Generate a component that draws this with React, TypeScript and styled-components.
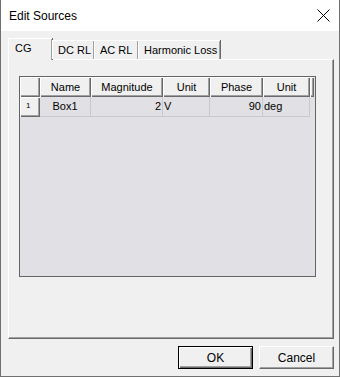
import React from "react";
import styled, { createGlobalStyle } from "styled-components";

const GlobalStyle = createGlobalStyle`
  html, body {
    margin: 0;
    padding: 0;
    background: #ffffff;
  }
  * {
    box-sizing: border-box;
  }
`;

const Window = styled.div`
  width: 340px;
  height: 377px;
  display: flex;
  flex-direction: column;
  border: 1px solid #707070;
  border-top: none;
  background: #f0f0f0;
  font-family: "Liberation Sans", Arial, sans-serif;
  color: #000;
`;

const TitleBar = styled.div`
  height: 31px;
  background: #ffffff;
  display: flex;
  align-items: center;
  justify-content: space-between;
  padding: 0 8px 0 8px;
  font-size: 12px;
`;

const CloseButton = styled.div`
  width: 14px;
  height: 14px;
  display: flex;
  align-items: center;
  justify-content: center;
  margin-right: 1px;
`;

const Body = styled.div`
  flex: 1;
  display: flex;
  flex-direction: column;
  padding: 7px 5px 0 7px;
`;

const TabStrip = styled.div`
  display: flex;
  align-items: flex-start;
  height: 21px;
  position: relative;
  z-index: 2;
`;

const Tab = styled.div<{ $w: number; $active?: boolean }>`
  width: ${(p) => p.$w}px;
  height: ${(p) => (p.$active ? 22 : 19)}px;
  margin-top: ${(p) => (p.$active ? 0 : 2)}px;
  padding: ${(p) => (p.$active ? "3px 0 0 6px" : "3px 0 0 5px")};
  font-size: 11px;
  background: #f0f0f0;
  border-top: 1px solid #ffffff;
  border-left: 1px solid #ffffff;
  box-shadow: inset -1px 0 0 #a0a0a0, 1px 0 0 #696969;
  white-space: nowrap;
`;

const Panel = styled.div`
  height: 280px;
  width: 326px;
  border-top: 1px solid #ffffff;
  border-left: 1px solid #ffffff;
  border-right: 1px solid #696969;
  border-bottom: 1px solid #696969;
  box-shadow: inset -1px -1px 0 #a0a0a0;
  padding: 16px 0 0 10px;
`;

const Grid = styled.div`
  width: 297px;
  height: 201px;
  border: 1px solid #646464;
  background: #e1e0e5;
  display: grid;
  grid-template-columns: 20px 51px 72px 47px 53px 47px 4px;
  grid-auto-rows: 20px;
  align-content: start;
`;

const HeaderCell = styled.div<{ $align?: string }>`
  background: #f0f0f0;
  box-shadow: inset 1px 1px 0 #ffffff, inset -1px -1px 0 #696969,
    inset -2px -2px 0 #a0a0a0;
  font-size: 11px;
  display: flex;
  align-items: center;
  justify-content: ${(p) => p.$align || "center"};
  padding-bottom: 1px;
`;

const RowHeader = styled(HeaderCell)`
  font-size: 8px;
  justify-content: flex-start;
  padding-left: 6px;
  padding-bottom: 4px;
`;

const Cell = styled.div<{ $align?: string }>`
  font-size: 11px;
  display: flex;
  align-items: center;
  justify-content: ${(p) =>
    p.$align === "right" ? "flex-end" : p.$align === "left" ? "flex-start" : "center"};
  border-right: 1px solid #c9c9cc;
  border-bottom: 1px solid #c9c9cc;
  padding: 0 1px 1px 1px;
`;

const Footer = styled.div`
  display: flex;
  justify-content: flex-end;
  gap: 6px;
  padding-top: 7px;
`;

const Button = styled.div<{ $default?: boolean }>`
  width: 75px;
  height: 23px;
  font-size: 12px;
  display: flex;
  align-items: center;
  justify-content: center;
  background: #f0f0f0;
  border: 1px solid ${(p) => (p.$default ? "#000000" : "#ffffff")};
  box-shadow: ${(p) =>
    p.$default
      ? "inset 1px 1px 0 #ffffff, inset -1px -1px 0 #696969, inset -2px -2px 0 #a0a0a0"
      : "inset -1px -1px 0 #a0a0a0, 0 0 0 0 transparent"};
  ${(p) => (p.$default ? "" : "border-right-color: #696969; border-bottom-color: #696969;")}
`;

const tabs = [
  { label: "CG", w: 44 },
  { label: "DC RL", w: 42 },
  { label: "AC RL", w: 44 },
  { label: "Harmonic Loss", w: 82 },
];

const headers = ["Name", "Magnitude", "Unit", "Phase", "Unit"];

export default function App() {
  return (
    <>
      <GlobalStyle />
      <Window>
        <TitleBar>
          <span>Edit Sources</span>
          <CloseButton>
            <svg width="13" height="13" viewBox="0 0 13 13">
              <path d="M0.5 0.5 L12.5 12.5 M12.5 0.5 L0.5 12.5" stroke="#000" strokeWidth="1" />
            </svg>
          </CloseButton>
        </TitleBar>
        <Body>
          <TabStrip>
            {tabs.map((t, i) => (
              <Tab key={t.label} $w={t.w} $active={i === 0}>
                {t.label}
              </Tab>
            ))}
          </TabStrip>
          <Panel>
            <Grid>
              <HeaderCell />
              {headers.map((h, i) => (
                <HeaderCell key={i}>{h}</HeaderCell>
              ))}
              <HeaderCell />
              <RowHeader>1</RowHeader>
              <Cell>Box1</Cell>
              <Cell $align="right">2</Cell>
              <Cell $align="left">V</Cell>
              <Cell $align="right">90</Cell>
              <Cell $align="left">deg</Cell>
            </Grid>
          </Panel>
          <Footer>
            <Button $default>OK</Button>
            <Button>Cancel</Button>
          </Footer>
        </Body>
      </Window>
    </>
  );
}
